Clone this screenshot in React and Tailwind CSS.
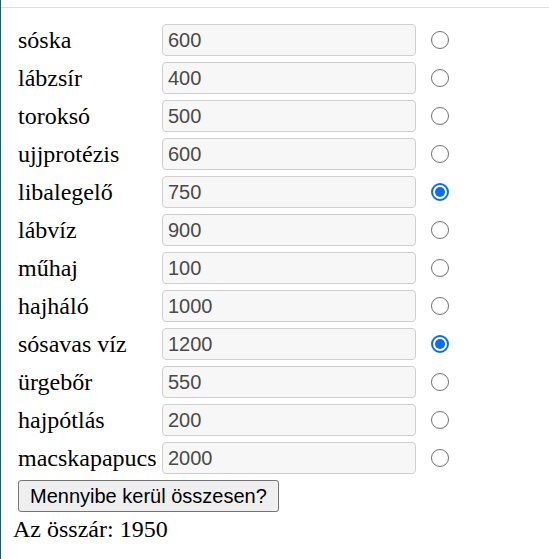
import { useState } from 'react'

const items = [
    { name: 'sóska', price: 600 },
    { name: 'lábzsír', price: 400 },
    { name: 'toroksó', price: 500 },
    { name: 'ujjprotézis', price: 600 },
    { name: 'libalegelő', price: 750, checked: true },
    { name: 'lábvíz', price: 900 },
    { name: 'műhaj', price: 100 },
    { name: 'hajháló', price: 1000 },
    { name: 'sósavas víz', price: 1200, checked: true },
    { name: 'ürgebőr', price: 550 },
    { name: 'hajpótlás', price: 200 },
    { name: 'macskapapucs', price: 2000 },
]

export default function App() {
    const [checked, setChecked] = useState(items.map((i) => Boolean(i.checked)))

    const toggle = (idx) => {
        setChecked((prev) => prev.map((c, i) => (i === idx ? !c : c)))
    }

    return (
        <div className="min-h-[559px] bg-white border-l border-[#1d5b73] font-['Liberation_Serif',serif] text-black">
            <div className="h-[7px]" />
            <div className="h-px bg-[#dedede]" />

            {/* Termékek */}
            <div className="pl-[17px] pt-[16px] flex flex-col gap-[6px]">
                {items.map((item, idx) => (
                    <div key={item.name} className="flex items-center h-[32px]">
                        <span className="w-[144px] text-[24px] leading-none">{item.name}</span>
                        <div className="w-[254px] h-[32px] px-[5px] flex items-center rounded-[4px] border border-[#cfcfcf] bg-[#f7f7f7] font-['Liberation_Sans',sans-serif] text-[20px] text-[#4a4a4a]">
                            {item.price}
                        </div>
                        <button
                            type="button"
                            onClick={() => toggle(idx)}
                            className="ml-[15px] w-[18px] h-[18px] rounded-full flex items-center justify-center"
                        >
                            {checked[idx] ? (
                                <span className="w-[18px] h-[18px] rounded-full border-[2px] border-[#0a6cf5] bg-white flex items-center justify-center">
                                    <span className="w-[10px] h-[10px] rounded-full bg-[#0a6cf5]" />
                                </span>
                            ) : (
                                <span className="w-[18px] h-[18px] rounded-full border border-[#707070] bg-white" />
                            )}
                        </button>
                    </div>
                ))}
            </div>

            <div className="pl-[17px] pt-[6px]">
                <button
                    type="button"
                    className="h-[32px] px-[11px] rounded-[3px] border border-[#767676] bg-[#efefef] font-['Liberation_Sans',sans-serif] text-[20px] leading-none text-black"
                >
                    Mennyibe kerül összesen?
                </button>
            </div>
            <p className="pl-[12px] pt-[2px] text-[24px] leading-[30px]">Az összár: 1950</p>
        </div>
    )
}
